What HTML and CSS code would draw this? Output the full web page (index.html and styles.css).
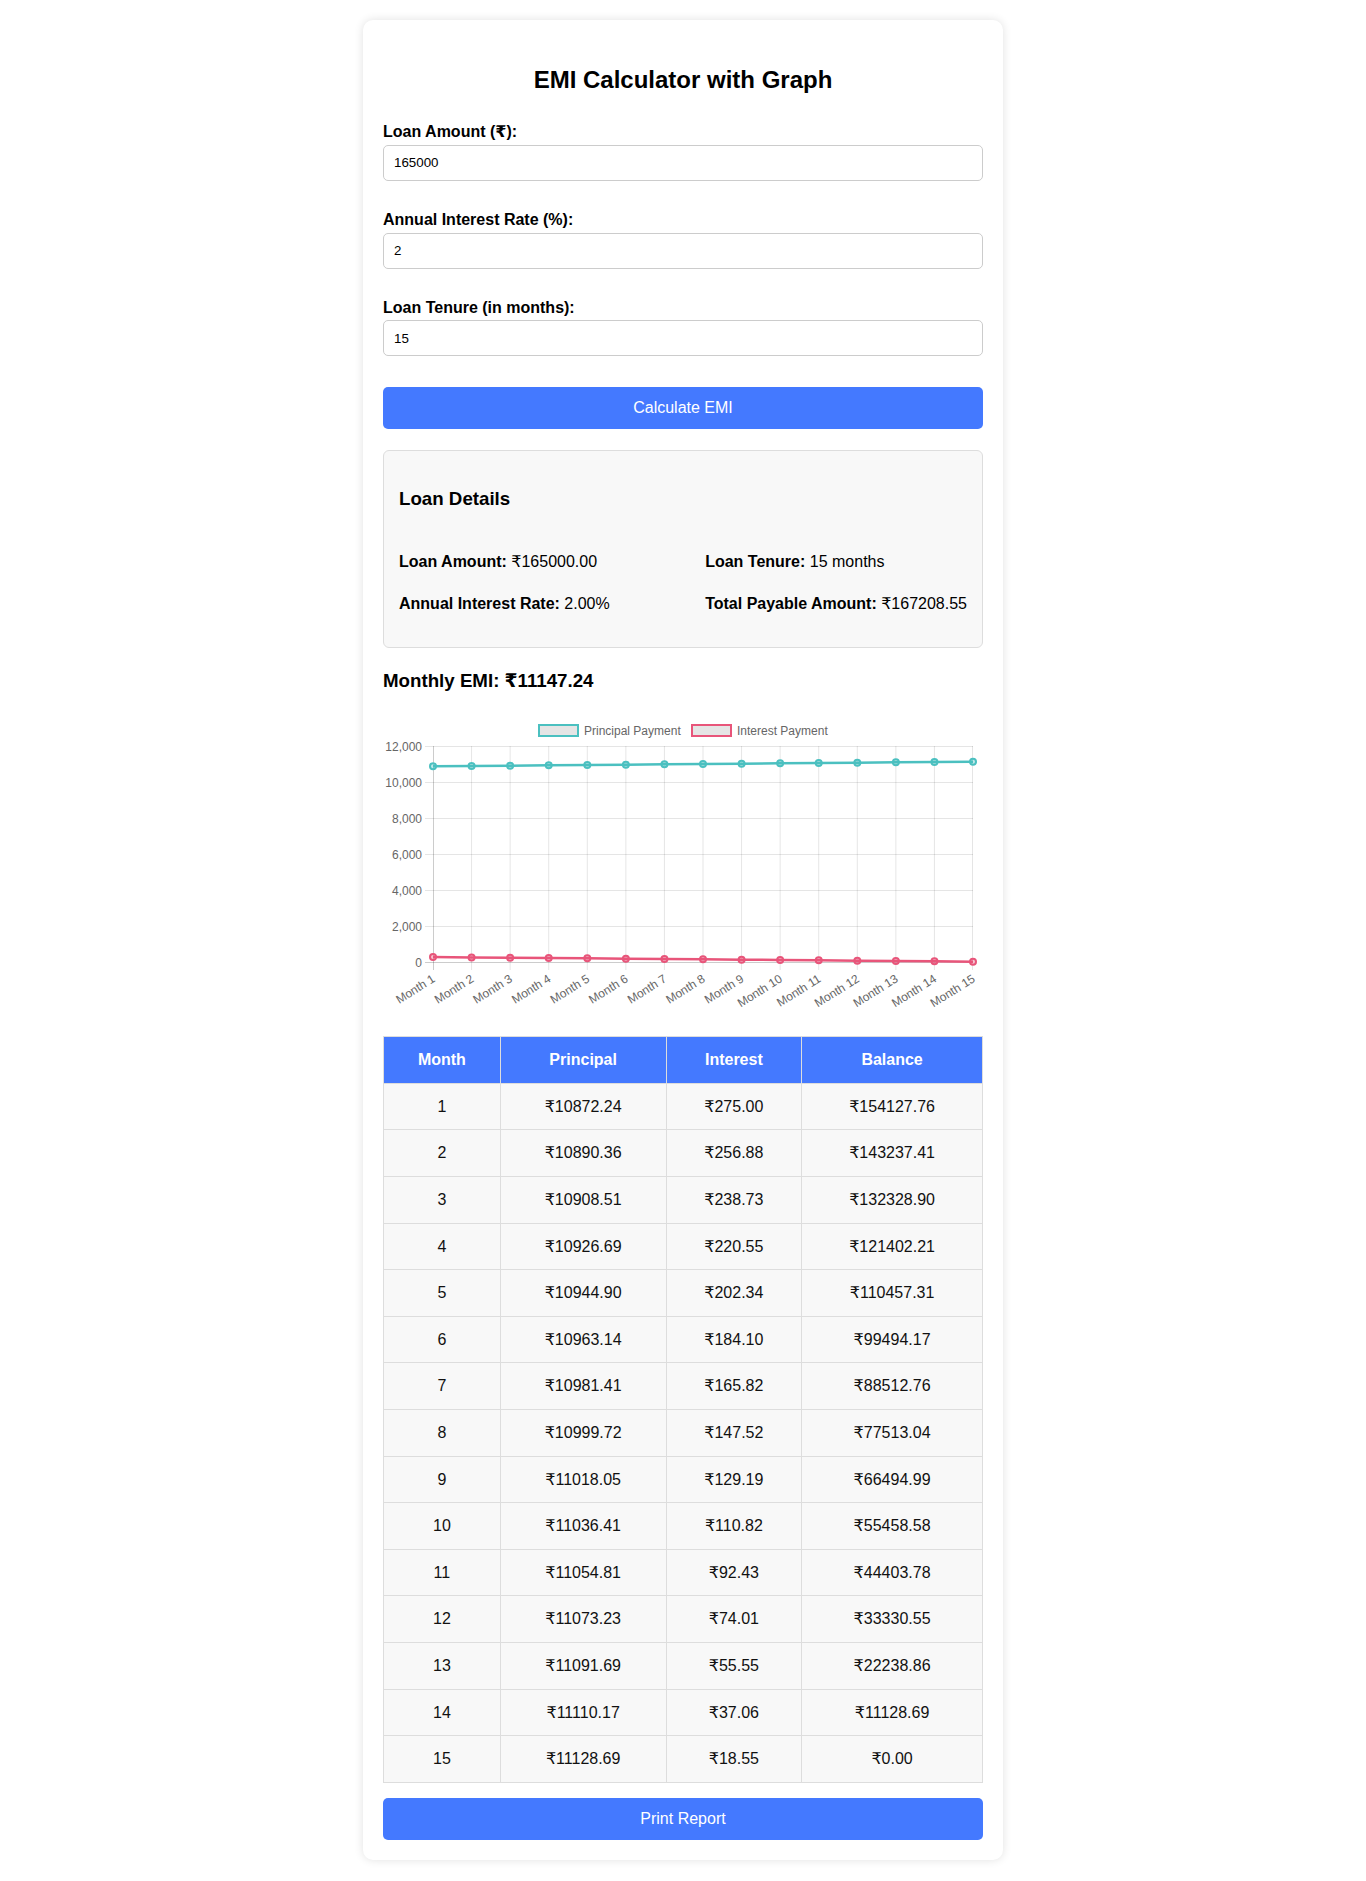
FILE: index.html
```html
<!DOCTYPE html>
<html lang="en">
<head>
<meta charset="UTF-8">
<title>EMI Calculator with Graph</title>
<link rel="stylesheet" href="styles.css">
</head>
<body>
<div class="container">
  <h2 class="title">EMI Calculator with Graph</h2>

  <div class="field">
    <label class="field-label" for="amount">Loan Amount (₹):</label>
    <input class="field-input" id="amount" type="number" value="165000">
  </div>
  <div class="field">
    <label class="field-label" for="rate">Annual Interest Rate (%):</label>
    <input class="field-input" id="rate" type="number" value="2">
  </div>
  <div class="field">
    <label class="field-label" for="tenure">Loan Tenure (in months):</label>
    <input class="field-input" id="tenure" type="number" value="15">
  </div>

  <button class="btn btn-calc" type="button">Calculate EMI</button>

  <div class="details">
    <h3 class="details-title">Loan Details</h3>
    <div class="details-grid">
      <div class="details-col">
        <p class="detail"><strong>Loan Amount:</strong> ₹165000.00</p>
        <p class="detail"><strong>Annual Interest Rate:</strong> 2.00%</p>
      </div>
      <div class="details-col">
        <p class="detail"><strong>Loan Tenure:</strong> 15 months</p>
        <p class="detail"><strong>Total Payable Amount:</strong> ₹167208.55</p>
      </div>
    </div>
  </div>

  <h3 class="emi">Monthly EMI: ₹11147.24</h3>

  <div class="chart">
    <svg class="chart-svg" width="600" height="300" viewBox="0 0 600 300">
      <!-- legend -->
      <rect x="156" y="10" width="39" height="11" fill="rgba(0,0,0,0.1)" stroke="rgb(75,192,192)" stroke-width="2"/>
      <text class="legend-text" x="201" y="20">Principal Payment</text>
      <rect x="309" y="10" width="39" height="11" fill="rgba(0,0,0,0.1)" stroke="rgb(232,85,122)" stroke-width="2"/>
      <text class="legend-text" x="354" y="20">Interest Payment</text>

      <!-- grid -->
      <g stroke="rgba(0,0,0,0.1)" stroke-width="1">
        <line x1="42" y1="31.5" x2="590" y2="31.5"/>
        <line x1="42" y1="67.5" x2="590" y2="67.5"/>
        <line x1="42" y1="103.5" x2="590" y2="103.5"/>
        <line x1="42" y1="139.5" x2="590" y2="139.5"/>
        <line x1="42" y1="175.5" x2="590" y2="175.5"/>
        <line x1="42" y1="211.5" x2="590" y2="211.5"/>
        <line x1="88.57" y1="31" x2="88.57" y2="255"/>
        <line x1="127.14" y1="31" x2="127.14" y2="255"/>
        <line x1="165.71" y1="31" x2="165.71" y2="255"/>
        <line x1="204.29" y1="31" x2="204.29" y2="255"/>
        <line x1="242.86" y1="31" x2="242.86" y2="255"/>
        <line x1="281.43" y1="31" x2="281.43" y2="255"/>
        <line x1="320" y1="31" x2="320" y2="255"/>
        <line x1="358.57" y1="31" x2="358.57" y2="255"/>
        <line x1="397.14" y1="31" x2="397.14" y2="255"/>
        <line x1="435.71" y1="31" x2="435.71" y2="255"/>
        <line x1="474.29" y1="31" x2="474.29" y2="255"/>
        <line x1="512.86" y1="31" x2="512.86" y2="255"/>
        <line x1="551.43" y1="31" x2="551.43" y2="255"/>
        <line x1="589.5" y1="31" x2="589.5" y2="255"/>
      </g>
      <g stroke="rgba(0,0,0,0.2)" stroke-width="1">
        <line x1="42" y1="247.5" x2="590" y2="247.5"/>
        <line x1="50.5" y1="31" x2="50.5" y2="255"/>
      </g>

      <!-- y labels -->
      <g class="tick-text" text-anchor="end">
        <text x="39" y="35.5">12,000</text>
        <text x="39" y="71.5">10,000</text>
        <text x="39" y="107.5">8,000</text>
        <text x="39" y="143.5">6,000</text>
        <text x="39" y="179.5">4,000</text>
        <text x="39" y="215.5">2,000</text>
        <text x="39" y="251.5">0</text>
      </g>

      <!-- x labels -->
      <g class="tick-text" text-anchor="end">
        <text transform="translate(53 266) rotate(-32)">Month 1</text>
        <text transform="translate(91.57 266) rotate(-32)">Month 2</text>
        <text transform="translate(130.14 266) rotate(-32)">Month 3</text>
        <text transform="translate(168.71 266) rotate(-32)">Month 4</text>
        <text transform="translate(207.29 266) rotate(-32)">Month 5</text>
        <text transform="translate(245.86 266) rotate(-32)">Month 6</text>
        <text transform="translate(284.43 266) rotate(-32)">Month 7</text>
        <text transform="translate(323 266) rotate(-32)">Month 8</text>
        <text transform="translate(361.57 266) rotate(-32)">Month 9</text>
        <text transform="translate(400.14 266) rotate(-32)">Month 10</text>
        <text transform="translate(438.71 266) rotate(-32)">Month 11</text>
        <text transform="translate(477.29 266) rotate(-32)">Month 12</text>
        <text transform="translate(515.86 266) rotate(-32)">Month 13</text>
        <text transform="translate(554.43 266) rotate(-32)">Month 14</text>
        <text transform="translate(593 266) rotate(-32)">Month 15</text>
      </g>

      <!-- principal line -->
      <polyline fill="none" stroke="rgb(75,192,192)" stroke-width="2.5" points="50,51.30 88.57,50.97 127.14,50.65 165.71,50.32 204.29,49.99 242.86,49.66 281.43,49.33 320,49.01 358.57,48.68 397.14,48.34 435.71,48.01 474.29,47.68 512.86,47.35 551.43,47.02 590,46.68"/>
      <g fill="rgba(75,192,192,0.35)" stroke="rgb(75,192,192)" stroke-width="2">
        <circle cx="50" cy="51.30" r="3"/>
        <circle cx="88.57" cy="50.97" r="3"/>
        <circle cx="127.14" cy="50.65" r="3"/>
        <circle cx="165.71" cy="50.32" r="3"/>
        <circle cx="204.29" cy="49.99" r="3"/>
        <circle cx="242.86" cy="49.66" r="3"/>
        <circle cx="281.43" cy="49.33" r="3"/>
        <circle cx="320" cy="49.01" r="3"/>
        <circle cx="358.57" cy="48.68" r="3"/>
        <circle cx="397.14" cy="48.34" r="3"/>
        <circle cx="435.71" cy="48.01" r="3"/>
        <circle cx="474.29" cy="47.68" r="3"/>
        <circle cx="512.86" cy="47.35" r="3"/>
        <circle cx="551.43" cy="47.02" r="3"/>
        <circle cx="590" cy="46.68" r="3"/>
      </g>

      <!-- interest line -->
      <polyline fill="none" stroke="rgb(232,85,122)" stroke-width="2.5" points="50,242.05 88.57,242.38 127.14,242.70 165.71,243.03 204.29,243.36 242.86,243.69 281.43,244.02 320,244.34 358.57,244.67 397.14,245.01 435.71,245.34 474.29,245.67 512.86,246.00 551.43,246.33 590,246.67"/>
      <g fill="rgba(232,85,122,0.35)" stroke="rgb(232,85,122)" stroke-width="2">
        <circle cx="50" cy="242.05" r="3"/>
        <circle cx="88.57" cy="242.38" r="3"/>
        <circle cx="127.14" cy="242.70" r="3"/>
        <circle cx="165.71" cy="243.03" r="3"/>
        <circle cx="204.29" cy="243.36" r="3"/>
        <circle cx="242.86" cy="243.69" r="3"/>
        <circle cx="281.43" cy="244.02" r="3"/>
        <circle cx="320" cy="244.34" r="3"/>
        <circle cx="358.57" cy="244.67" r="3"/>
        <circle cx="397.14" cy="245.01" r="3"/>
        <circle cx="435.71" cy="245.34" r="3"/>
        <circle cx="474.29" cy="245.67" r="3"/>
        <circle cx="512.86" cy="246.00" r="3"/>
        <circle cx="551.43" cy="246.33" r="3"/>
        <circle cx="590" cy="246.67" r="3"/>
      </g>
    </svg>
  </div>

  <table class="schedule">
    <thead>
      <tr><th>Month</th><th>Principal</th><th>Interest</th><th>Balance</th></tr>
    </thead>
    <tbody>
      <tr><td>1</td><td>₹10872.24</td><td>₹275.00</td><td>₹154127.76</td></tr>
      <tr><td>2</td><td>₹10890.36</td><td>₹256.88</td><td>₹143237.41</td></tr>
      <tr><td>3</td><td>₹10908.51</td><td>₹238.73</td><td>₹132328.90</td></tr>
      <tr><td>4</td><td>₹10926.69</td><td>₹220.55</td><td>₹121402.21</td></tr>
      <tr><td>5</td><td>₹10944.90</td><td>₹202.34</td><td>₹110457.31</td></tr>
      <tr><td>6</td><td>₹10963.14</td><td>₹184.10</td><td>₹99494.17</td></tr>
      <tr><td>7</td><td>₹10981.41</td><td>₹165.82</td><td>₹88512.76</td></tr>
      <tr><td>8</td><td>₹10999.72</td><td>₹147.52</td><td>₹77513.04</td></tr>
      <tr><td>9</td><td>₹11018.05</td><td>₹129.19</td><td>₹66494.99</td></tr>
      <tr><td>10</td><td>₹11036.41</td><td>₹110.82</td><td>₹55458.58</td></tr>
      <tr><td>11</td><td>₹11054.81</td><td>₹92.43</td><td>₹44403.78</td></tr>
      <tr><td>12</td><td>₹11073.23</td><td>₹74.01</td><td>₹33330.55</td></tr>
      <tr><td>13</td><td>₹11091.69</td><td>₹55.55</td><td>₹22238.86</td></tr>
      <tr><td>14</td><td>₹11110.17</td><td>₹37.06</td><td>₹11128.69</td></tr>
      <tr><td>15</td><td>₹11128.69</td><td>₹18.55</td><td>₹0.00</td></tr>
    </tbody>
  </table>

  <button class="btn btn-print" type="button">Print Report</button>
</div>
</body>
</html>
```

FILE: styles.css
```css
* {
  box-sizing: border-box;
}

body {
  margin: 0;
  padding: 20px;
  background: #ffffff;
  font-family: Arial, "Liberation Sans", "DejaVu Sans", sans-serif;
  font-size: 16px;
  line-height: 1.6;
  color: #000;
}

.container {
  max-width: 640px;
  margin: 0 auto;
  padding: 20px;
  background: #fff;
  border-radius: 10px;
  box-shadow: 0 0 10px rgba(0, 0, 0, 0.12);
}

.title {
  margin: 21px 0 20px;
  font-size: 24px;
  font-weight: bold;
  text-align: center;
}

.field {
  margin-bottom: 26px;
}

.field-label {
  display: block;
  font-weight: bold;
}

.field-input {
  display: block;
  width: 100%;
  height: 36px;
  padding: 0 10px;
  margin: 0;
  border: 1px solid #ccc;
  border-radius: 5px;
  font-family: Arial, "Liberation Sans", sans-serif;
  font-size: 13.33px;
  color: #000;
  background: #fff;
}

.btn {
  display: block;
  width: 100%;
  height: 42px;
  border: none;
  border-radius: 5px;
  background: #4479ff;
  color: #fff;
  font-family: Arial, "Liberation Sans", sans-serif;
  font-size: 16px;
  cursor: pointer;
}

.btn-calc {
  margin-top: 31px;
}

.details {
  margin-top: 21px;
  padding: 15px;
  background: #f8f8f8;
  border: 1px solid #ddd;
  border-radius: 6px;
}

.details-title {
  margin: 18px 0 0;
  font-size: 18.72px;
}

.details-grid {
  display: flex;
  justify-content: space-between;
  margin-top: 35px;
}

.detail {
  margin: 0 0 16px;
}

.detail:last-child {
  margin-bottom: 16px;
}

.emi {
  margin: 18px 0 0;
  font-size: 18.72px;
}

.chart {
  margin-top: 19px;
  height: 300px;
}

.chart-svg {
  display: block;
}

.legend-text,
.tick-text {
  font-family: Arial, "Liberation Sans", sans-serif;
  font-size: 12px;
  fill: #666;
}

.schedule {
  width: 100%;
  margin-top: 21px;
  border-collapse: collapse;
}

.schedule th,
.schedule td {
  padding: 10px;
  border: 1px solid #ddd;
  text-align: center;
}

.schedule th {
  background: #4479ff;
  color: #fff;
  font-weight: bold;
}

.schedule td {
  background: #f8f8f8;
  color: #111;
}

.btn-print {
  margin-top: 15px;
}
```
